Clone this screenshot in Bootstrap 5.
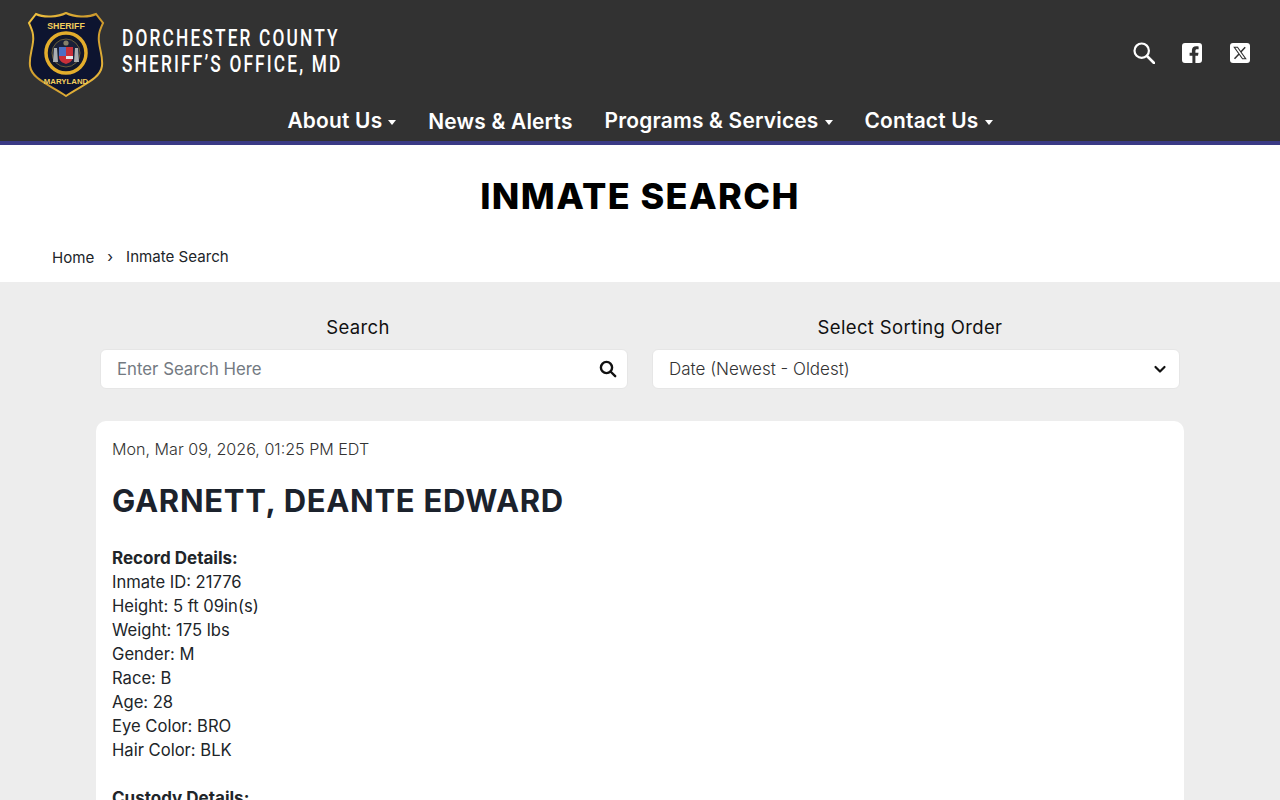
<!DOCTYPE html>
<html lang="en">
<head>
<meta charset="utf-8">
<title>Inmate Search</title>
<link rel="stylesheet" href="https://cdn.jsdelivr.net/npm/bootstrap@5.3.0/dist/css/bootstrap.min.css">
<style>
body{font-family:Inter,"Noto Sans",sans-serif;background:#ededed;color:#212529;}
.site-head{background:#323232;border-bottom:4px solid #3a3a85;height:145px;padding:12px 30px 0 27px;}
.brand-name{font-family:Roboto,sans-serif;font-weight:500;font-size:24px;line-height:26px;letter-spacing:3px;color:#fff;margin-left:17px;margin-top:-7px;transform:scaleX(.72);transform-origin:left center;white-space:nowrap;}
.head-icons{margin-top:-3px;}
.head-icons .gap-search{margin-right:27px;}
.head-icons .gap-fb{margin-right:28px;}
.top-nav{gap:32px;margin-top:8px;height:32px;padding-left:3px;}
.top-nav a{color:#fff;text-decoration:none;font-weight:600;font-size:20.9px;letter-spacing:.2px;line-height:32px;white-space:nowrap;}
.top-nav .shift{margin-top:1px;}
.caret-mark{display:inline-block;border-left:4px solid transparent;border-right:4px solid transparent;border-top:5px solid #fff;margin-left:6px;vertical-align:3px;}
.title-band{background:#fff;height:137px;}
.page-title{font-weight:800;font-size:36px;line-height:43px;color:#000;padding-top:30px;margin:0;letter-spacing:1.4px;}
.crumbs{padding:0 0 0 52px;margin-top:29px;font-size:15.1px;color:#212529;line-height:20px;}
.crumbs .breadcrumb-item+.breadcrumb-item{padding-left:13px;}
.crumbs .breadcrumb-item+.breadcrumb-item::before{content:"\203A";color:#212529;padding-right:13px;}
.crumbs a{color:#212529;text-decoration:none;position:relative;top:1px;}
.filters{padding:31px 100px 0;gap:24px;}
.filter-col{flex:1 1 0;}
.filter-label{font-size:18.5px;line-height:28px;letter-spacing:.35px;color:#111;text-align:center;padding-right:12px;margin-bottom:8px;}
.filter-box{height:40px;background:#fff;border:1px solid #e6e6e6;border-radius:6px;padding:0 12px 0 16px;}
.filter-box input{border:0;outline:0;padding:2px 0 0;flex:1;font-size:16.8px;color:#333;background:transparent;min-width:0;}
.filter-box input::placeholder{color:#737a82;opacity:1;}
.filter-box span{font-size:17px;color:#333;font-weight:300;position:relative;top:1px;}
.filter-box .glass{margin-right:-2px;}
.record-card{margin:32px 96px 0;border:0;border-radius:10px;padding:16px;background:#fff;}
.rec-date{font-size:16.1px;font-weight:300;line-height:24px;color:#333;margin-bottom:21px;}
.rec-name{font-size:31px;font-weight:700;line-height:37px;color:#1b222c;margin-bottom:27px;letter-spacing:.7px;}
.rec-lines{font-size:16.6px;line-height:24px;color:#212529;margin-bottom:24px;font-weight:400;}
.rec-lines b{font-weight:700;font-size:17px;}
</style>
</head>
<body>
<header class="site-head">
  <div class="d-flex justify-content-between align-items-center">
    <div class="d-flex align-items-center">
      <svg width="78" height="85" viewBox="0 0 78 85" aria-label="Sheriff badge">
        <defs>
          <linearGradient id="gold" x1="0" y1="0" x2="1" y2="1"><stop offset="0" stop-color="#f2c440"/><stop offset=".5" stop-color="#c9962b"/><stop offset="1" stop-color="#f0c040"/></linearGradient>
        </defs>
        <path d="M39 1 C47 5 61 6 69 2 L76 11 C73 18 71 22 72 30 C73 39 76 45 75 54 C73 67 57 72 39 84 C21 72 5 67 3 54 C2 45 5 39 6 30 C7 22 5 18 2 11 L9 2 C17 6 31 5 39 1 Z" fill="#0d1430" stroke="url(#gold)" stroke-width="2"/>
        <text x="39" y="16.500" text-anchor="middle" font-family="Liberation Sans" font-weight="700" font-size="8.800" fill="#f4cf5c">SHERIFF</text>
        <circle cx="39" cy="41" r="20" fill="#11172b" stroke="#e3ad2c" stroke-width="3.500"/>
        <circle cx="39" cy="41" r="14" fill="#1a2038" stroke="#8c7a3c" stroke-width=".7"/>
        <path d="M32 35h14v10c0 4-4 6-7 7-3-1-7-3-7-7z" fill="#c9303a"/>
        <path d="M32 35h7v9h-7z" fill="#4c6fc4"/>
        <path d="M39 44h7v3h-7z" fill="#e8e8e8"/>
        <circle cx="39" cy="31" r="2.600" fill="#86806a"/>
        <path d="M27 36h3l1 14h-5zM48 36h3l1 14h-5z" fill="#a9adb0"/>
        <text x="39" y="71.500" text-anchor="middle" font-family="Liberation Sans" font-weight="700" font-size="7.800" fill="#f4cf5c">MARYLAND</text>
      </svg>
      <div class="brand-name">DORCHESTER COUNTY<br>SHERIFF’S OFFICE, MD</div>
    </div>
    <div class="d-flex align-items-center head-icons">
      <svg class="gap-search" width="22" height="22" viewBox="0 0 22 22" fill="none" stroke="#fff" stroke-width="2.200" stroke-linecap="round"><circle cx="8.700" cy="8.700" r="7.200"/><path d="M14 14l7 7" stroke-width="2.600"/></svg>
      <svg class="gap-fb" width="20" height="20" viewBox="0 0 20 20"><path fill="#fff" d="M3 0h14a3 3 0 0 1 3 3v14a3 3 0 0 1-3 3h-3.600v-7.200h2.600l.5-3.100h-3.100V7.800c0-.9.4-1.600 1.700-1.600h1.500V3.500c-.7-.1-1.600-.2-2.500-.2-2.600 0-4.200 1.500-4.200 4.200v2.200H7.600v3.100h2.800V20H3a3 3 0 0 1-3-3V3a3 3 0 0 1 3-3z"/></svg>
      <svg width="20" height="20" viewBox="0 0 20 20"><rect width="20" height="20" rx="3" fill="#fff"/><path fill="none" stroke="#323232" stroke-width="1.100" d="M4.300 4.300h3.200l8.200 11.400h-3.200z"/><path stroke="#323232" stroke-width="1.500" d="M15.200 4.200L10.800 9M9 11l-4.500 4.800"/></svg>
    </div>
  </div>
  <nav class="d-flex justify-content-center top-nav">
    <a href="#">About Us<i class="caret-mark"></i></a>
    <a href="#" class="shift">News &amp; Alerts</a>
    <a href="#">Programs &amp; Services<i class="caret-mark"></i></a>
    <a href="#">Contact Us<i class="caret-mark"></i></a>
  </nav>
</header>
<section class="title-band">
  <h1 class="page-title text-center">INMATE SEARCH</h1>
  <ol class="breadcrumb crumbs mb-0">
    <li class="breadcrumb-item"><a href="#">Home</a></li>
    <li class="breadcrumb-item active text-reset">Inmate Search</li>
  </ol>
</section>
<section class="d-flex filters">
  <div class="filter-col">
    <div class="filter-label">Search</div>
    <div class="filter-box d-flex align-items-center">
      <input type="text" placeholder="Enter Search Here">
      <svg class="glass" width="18" height="18" viewBox="0 0 18 18" fill="none" stroke="#111" stroke-width="2.400" stroke-linecap="round"><circle cx="7.500" cy="7.500" r="5.600"/><path d="M12 12l4.200 4.200"/></svg>
    </div>
  </div>
  <div class="filter-col">
    <div class="filter-label">Select Sorting Order</div>
    <div class="filter-box d-flex align-items-center justify-content-between">
      <span>Date (Newest - Oldest)</span>
      <svg width="14" height="14" viewBox="0 0 14 14" fill="none" stroke="#111" stroke-width="2.200" stroke-linecap="round" stroke-linejoin="round"><path d="M2.500 5l4.500 4.500L11.500 5"/></svg>
    </div>
  </div>
</section>
<main class="record-card">
  <div class="rec-date">Mon, Mar 09, 2026, 01:25 PM EDT</div>
  <h2 class="rec-name">GARNETT, DEANTE EDWARD</h2>
  <div class="rec-lines">
    <b>Record Details:</b><br>Inmate ID: 21776<br>Height: 5 ft 09in(s)<br>Weight: 175 lbs<br>Gender: M<br>Race: B<br>Age: 28<br>Eye Color: BRO<br>Hair Color: BLK
  </div>
  <div class="rec-lines">
    <b>Custody Details:</b><br>Housing Status: In Custody
  </div>
</main>
<script src="https://cdn.jsdelivr.net/npm/bootstrap@5.3.0/dist/js/bootstrap.bundle.min.js"></script>
</body>
</html>
